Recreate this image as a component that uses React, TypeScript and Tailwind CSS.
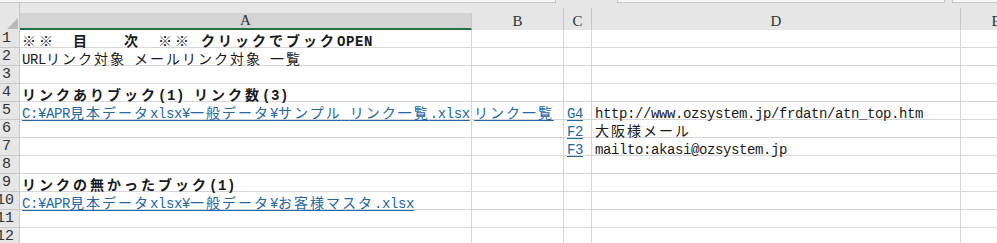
import type { ReactNode } from "react"

const LINK = "text-[#2267a6] underline decoration-[1px] underline-offset-[2px]"

// split into half-width (latin) and full-width (CJK) runs, like MS Gothic cells
function Txt({ s, bold = false }: { s: string; bold?: boolean }) {
  const runs: { half: boolean; t: string }[] = []
  for (const ch of s) {
    const half = ch.charCodeAt(0) < 0x2000
    const last = runs[runs.length - 1]
    if (last && last.half === half) last.t += ch
    else runs.push({ half, t: ch })
  }
  return (
    <>
      {runs.map((r, i) =>
        r.half ? (
          <span
            key={i}
            className={
              bold
                ? "font-['Liberation_Mono'] text-[14px] font-bold tracking-[0.6px]"
                : "font-['Liberation_Mono'] text-[14px] tracking-[-0.4px]"
            }
          >
            {r.t}
          </span>
        ) : (
          <span
            key={i}
            className={bold ? "text-[14px] font-bold tracking-[3px]" : "text-[14px] tracking-[2px]"}
          >
            {r.t}
          </span>
        )
      )}
    </>
  )
}

type Row = { a?: ReactNode; b?: ReactNode; c?: ReactNode; d?: ReactNode }

const ROWS: Row[] = [
  { a: <Txt s="※※　目　　次　※※ クリックでブックOPEN" bold /> },
  { a: <Txt s="URLリンク対象 メールリンク対象 一覧" /> },
  {},
  { a: <Txt s="リンクありブック(1) リンク数(3)" bold /> },
  {
    a: (
      <span className={LINK}>
        <Txt s="C:¥APR見本データxlsx¥一般データ¥サンプル リンク一覧.xlsx" />
      </span>
    ),
    b: (
      <span className={LINK}>
        <Txt s="リンク一覧" />
      </span>
    ),
    c: (
      <span className={LINK}>
        <Txt s="G4" />
      </span>
    ),
    d: <Txt s="http://www.ozsystem.jp/frdatn/atn_top.htm" />,
  },
  {
    c: (
      <span className={LINK}>
        <Txt s="F2" />
      </span>
    ),
    d: <Txt s="大阪様メール" />,
  },
  {
    c: (
      <span className={LINK}>
        <Txt s="F3" />
      </span>
    ),
    d: <Txt s="mailto:akasi@ozsystem.jp" />,
  },
  {},
  { a: <Txt s="リンクの無かったブック(1)" bold /> },
  {
    a: (
      <span className={LINK}>
        <Txt s="C:¥APR見本データxlsx¥一般データ¥お客様マスタ.xlsx" />
      </span>
    ),
  },
  {},
  {},
]

const CELL = "h-[18px] shrink-0 border-b border-r border-[#d6d6d6] leading-[18px] whitespace-nowrap"

export default function App() {
  return (
    <div className="w-[997px] h-[243px] overflow-hidden bg-white font-['Noto_Sans_CJK_JP',sans-serif] text-[16px] text-[#1a1a1a]">
      {/* remains of the formula bar */}
      <div className="flex h-[3px] bg-[#e6e6e6]">
        <div className="w-[556px] border-b border-r border-[#c4c4c4] bg-[#f6f6f6]" />
        <div className="w-[61px]" />
        <div className="w-[328px] border-b border-l border-r border-[#c4c4c4] bg-[#f6f6f6]" />
        <div className="w-[7px]" />
        <div className="flex-1 border-b border-l border-[#c4c4c4] bg-[#f6f6f6]" />
      </div>

      {/* column headers */}
      <div className="flex h-[27px] bg-[#e6e6e6] font-['Liberation_Serif',serif] text-[15px] text-[#333]">
        <div className="relative w-[20px] shrink-0 border-r border-[#c8c8c8]">
          <svg className="absolute left-[7px] top-[15px]" width="11" height="11" viewBox="0 0 11 11">
            <polygon points="11,0 11,11 0,11" fill="#b9b9b9" />
          </svg>
        </div>
        <div className="mt-[10px] flex w-[452px] shrink-0 items-center justify-center border-b-2 border-r border-b-[#217346] border-r-[#c8c8c8] bg-[#d4d4d4]">
          A
        </div>
        <div className="mt-[5px] flex w-[92px] shrink-0 items-center justify-center border-r border-[#c8c8c8] pt-[5px]">
          B
        </div>
        <div className="mt-[5px] flex w-[28px] shrink-0 items-center justify-center border-r border-[#c8c8c8] pt-[5px]">
          C
        </div>
        <div className="mt-[5px] flex w-[369px] shrink-0 items-center justify-center border-r border-[#c8c8c8] pt-[5px]">
          D
        </div>
        <div className="mt-[5px] flex w-[70px] shrink-0 items-center justify-center pt-[5px]">E</div>
      </div>

      {/* sheet rows */}
      <div className="flex flex-col">
        {ROWS.map((r, i) => (
          <div key={i} className="flex">
            <div className="h-[18px] w-[20px] shrink-0 overflow-hidden whitespace-nowrap border-b border-r border-[#c8c8c8] bg-[#e6e6e6] font-['Liberation_Mono',monospace] text-[15px] leading-[18px] text-[#333]">
              <span className={i + 1 < 10 ? "pl-[2px]" : "ml-[-4px]"}>{i + 1}</span>
            </div>
            <div className={`${CELL} w-[452px] pl-[2px]`}>{r.a}</div>
            <div className={`${CELL} w-[92px] pl-[2px]`}>{r.b}</div>
            <div className={`${CELL} w-[28px] pl-[3px]`}>{r.c}</div>
            <div className={`${CELL} w-[369px] pl-[3px]`}>{r.d}</div>
            <div className="h-[18px] w-[70px] shrink-0 border-b border-[#d6d6d6]" />
          </div>
        ))}
      </div>
    </div>
  )
}
